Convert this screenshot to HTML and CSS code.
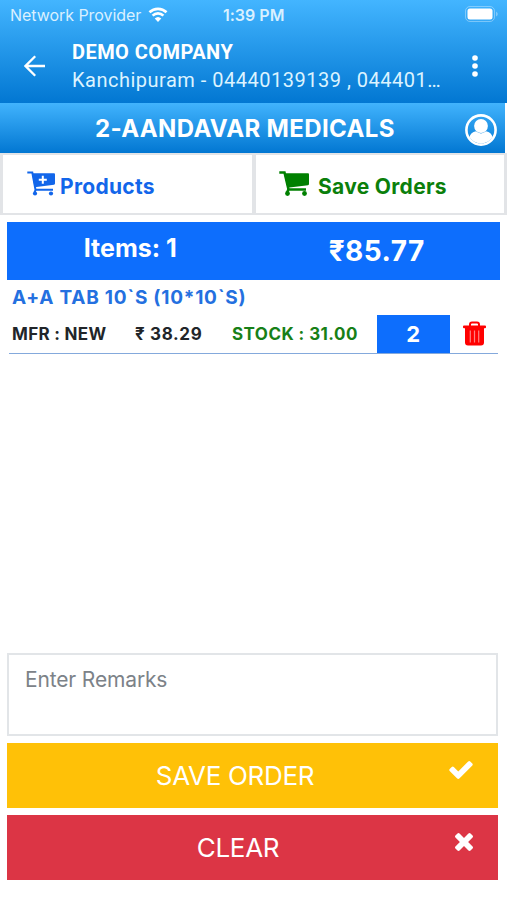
FILE: index.html
```html
<!DOCTYPE html>
<html lang="en">
<head>
  <meta charset="utf-8">
  <meta name="viewport" content="width=device-width, initial-scale=1">
  <title>Save Orders</title>
  <link rel="stylesheet" href="styles.css">
</head>
<body>
  <header class="app-header">
    <div class="status-bar">
      <span class="carrier">Network Provider</span>
      <svg class="wifi" viewBox="0 0 20 15">
        <path d="M1.500 5.300a12.300 12.300 0 0 1 17 0M4.600 8.600a7.800 7.800 0 0 1 10.800 0" fill="none" stroke="#fff" stroke-width="2.700"/>
        <path d="M10 15L6.700 11.600a4.800 4.800 0 0 1 6.600 0z" fill="#fff"/>
      </svg>
      <span class="clock">1:39 PM</span>
      <svg class="battery" viewBox="0 0 34 16">
        <rect x="0.500" y="0.500" width="29" height="15" rx="4.500" fill="none" stroke="#fff" stroke-opacity="0.350"/>
        <rect x="2.500" y="2.500" width="25" height="11" rx="2.500" fill="#fff"/>
        <path d="M31 5.500q1.800 1 1.800 2.500t-1.800 2.500z" fill="#fff" fill-opacity="0.350"/>
      </svg>
    </div>
    <div class="title-bar">
      <svg class="back" viewBox="0 0 22 22">
        <path d="M21 11H2M11.200 1.300L1.500 11l9.700 9.700" fill="none" stroke="#fff" stroke-width="2.300"/>
      </svg>
      <div class="company">
        <div class="company-name">DEMO COMPANY</div>
        <div class="company-info">Kanchipuram - 04440139139 , 044401…</div>
      </div>
      <svg class="more" viewBox="0 0 6 22">
        <circle cx="3" cy="3" r="2.800" fill="#fff"/>
        <circle cx="3" cy="11" r="2.800" fill="#fff"/>
        <circle cx="3" cy="19" r="2.800" fill="#fff"/>
      </svg>
    </div>
  </header>

  <div class="customer-bar">
    <span class="customer-name">2-AANDAVAR MEDICALS</span>
    <svg class="user" viewBox="0 0 32 32">
      <circle cx="16" cy="16" r="14.600" fill="none" stroke="#fff" stroke-width="2.600"/>
      <path d="M4.500 23q1-4.500 6.500-5.700 5 4.300 10 0 5.500 1.200 6.500 5.700a13.500 13.500 0 0 1-23 0z" fill="#fff"/>
      <circle cx="16" cy="12" r="6.900" fill="#fff"/>
    </svg>
  </div>

  <nav class="tabs">
    <a class="tab tab-products">
      <svg class="cart" viewBox="0 0 28 25">
        <path d="M.3 1.500h5l3.200 17.300H26M8.800 18.500l-1.300 3" fill="none" stroke="currentColor" stroke-width="2"/>
        <path d="M5 2.200H27q1 0 1 1V12.500q0 1-1 1.200L7.500 16.200z" fill="currentColor"/>
        <circle cx="8" cy="22.500" r="2.100" fill="currentColor"/>
        <circle cx="24" cy="22.500" r="2.100" fill="currentColor"/>
        <path d="M15.800 4.800v8M11.800 8.800h8" stroke="#fff" stroke-width="2"/>
      </svg>
      <span>Products</span>
    </a>
    <a class="tab tab-orders">
      <svg class="cart" viewBox="0 0 30 25">
        <path d="M.3 1.500h5.200l4 17H27M9.500 18l-1.300 3.500" fill="none" stroke="currentColor" stroke-width="2.500"/>
        <path d="M5 2.200H29q1 0 1 1V13q0 1-1 1.200L8.500 16.700z" fill="currentColor"/>
        <circle cx="8.500" cy="22.500" r="2.400" fill="currentColor"/>
        <circle cx="25.500" cy="22.500" r="2.400" fill="currentColor"/>
      </svg>
      <span>Save Orders</span>
    </a>
  </nav>

  <main class="content">
    <div class="totals">
      <span class="total-items">Items: 1</span>
      <span class="total-amount">₹85.77</span>
    </div>

    <div class="item">
      <div class="item-name">A+A TAB 10`S (10*10`S)</div>
      <div class="item-row">
        <span class="item-mfr">MFR : NEW</span>
        <span class="item-price">₹ 38.29</span>
        <span class="item-stock">STOCK : 31.00</span>
        <span class="item-qty">2</span>
        <svg class="trash" viewBox="0 0 23 26">
          <path d="M7 5V3.500q0-2 2-2h5q2 0 2 2V5" fill="none" stroke="#f00" stroke-width="2"/>
          <path d="M1 4.500h21q1 0 1 1v.8q0 1-1 1H1q-1 0-1-1v-.8q0-1 1-1zM2 7h19v14.500q0 3-3 3H5q-3 0-3-3z" fill="#f00"/>
          <path d="M7.300 9.500v12M11.500 9.500v12M15.700 9.500v12" stroke="#ff8080" stroke-width="1.200"/>
        </svg>
      </div>
    </div>

    <div class="actions">
      <textarea class="remarks" placeholder="Enter Remarks"></textarea>
      <button class="btn btn-save">
        <span>SAVE ORDER</span>
        <svg class="check" viewBox="121 334 1550 1188">
          <path fill="#fff" d="M1671 566q0 40-28 68l-724 724-136 136q-28 28-68 28t-68-28l-136-136-362-362q-28-28-28-68t28-68l136-136q28-28 68-28t68 28l294 295 656-657q28-28 68-28t68 28l136 136q28 28 28 68z"/>
        </svg>
      </button>
      <button class="btn btn-clear">
        <span>CLEAR</span>
        <svg class="times" viewBox="302 366 1188 1188">
          <path fill="#fff" d="M1490 1322q0 40-28 68l-136 136q-28 28-68 28t-68-28l-294-294-294 294q-28 28-68 28t-68-28l-136-136q-28-28-28-68t28-68l294-294-294-294q-28-28-28-68t28-68l136-136q28-28 68-28t68 28l294 294 294-294q28-28 68-28t68 28l136 136q28 28 28 68t-28 68l-294 294 294 294q28 28 28 68z"/>
        </svg>
      </button>
    </div>
  </main>
</body>
</html>
```
FILE: styles.css
```css
* {
  box-sizing: border-box;
}

body {
  display: flex;
  flex-direction: column;
  height: 900px;
  margin: 0;
  background-color: #fff;
  font-family: Inter, "Liberation Sans", sans-serif;
  font-feature-settings: "calt" 0;
  color: #212529;
  white-space: nowrap;
  overflow: hidden;
}

svg {
  display: block;
  flex: none;
}

.app-header {
  height: 103px;
  background: linear-gradient(to bottom, #43b5ff, #0277d2);
  color: #fff;
}

.status-bar {
  display: flex;
  align-items: center;
  height: 29px;
  padding: 0 8px 0 10px;
  color: #d9f0ff;
}

.carrier {
  width: 138px;
  font-size: 16px;
  letter-spacing: -0.05px;
}

.wifi {
  width: 20px;
  height: 15px;
}

.clock {
  margin-left: 55px;
  font-size: 16px;
  font-weight: 600;
}

.battery {
  width: 34px;
  height: 16px;
  margin-left: auto;
  margin-bottom: 1px;
}

.title-bar {
  display: flex;
  align-items: center;
  height: 74px;
  padding: 0 29px 0 24px;
}

.back {
  width: 22px;
  height: 22px;
}

.company {
  flex: 1;
  padding-left: 26px;
  font-family: Roboto, sans-serif;
}

.company-name {
  font-size: 20px;
  font-weight: 700;
  line-height: 28px;
  letter-spacing: 0.45px;
}

.company-info {
  font-size: 20px;
  line-height: 28px;
  letter-spacing: 0.5px;
  color: #dcf3ff;
}

.more {
  width: 6px;
  height: 22px;
}

.customer-bar {
  display: flex;
  align-items: center;
  width: 505px;
  height: 50px;
  padding: 0 8px 0 95px;
  background: linear-gradient(to bottom, #41b3fd, #0277d2);
  color: #fff;
}

.customer-name {
  flex: 1;
  font-size: 24px;
  font-weight: 650;
  letter-spacing: 0.35px;
}

.user {
  width: 32px;
  height: 32px;
  margin-top: 4px;
}

.tabs {
  display: grid;
  grid-template-columns: 249px 248px;
  gap: 4px;
  height: 62px;
  padding: 2px 3px 2px 3px;
  background-color: #e2e4e7;
}

.tab {
  display: flex;
  align-items: center;
  background-color: #fff;
  font-size: 21px;
  font-weight: 650;
  letter-spacing: 0.3px;
  padding-left: 24px;
  padding-top: 4px;
}

.tab-products {
  gap: 5px;
  color: #1266ea;
}

.tab-orders {
  gap: 9px;
  padding-left: 23px;
  color: #0b7f0b;
}

.cart {
  width: 28px;
  height: 25px;
  margin-bottom: 5px;
}

.tab-orders .cart {
  width: 30px;
  height: 25px;
  color: #008000;
}

.content {
  display: flex;
  flex: 1;
  flex-direction: column;
  padding: 7px 9px 20px 7px;
}

.totals {
  display: grid;
  grid-template-columns: 1fr 1fr;
  width: 493px;
  height: 58px;
  background-color: #0d6efd;
  color: #fff;
  font-size: 25px;
  font-weight: 650;
  line-height: 53px;
  text-align: center;
}

.total-amount {
  font-size: 28px;
  line-height: 59px;
  letter-spacing: 0.5px;
}

.item {
  height: 74px;
  margin-left: 2px;
  border-bottom: 1px solid #84a9dc;
}

.item-name {
  height: 35px;
  padding-left: 3px;
  font-size: 19px;
  font-weight: 650;
  line-height: 36px;
  letter-spacing: 0.75px;
  color: #2470e0;
}

.item-row {
  display: flex;
  align-items: center;
  height: 38px;
  padding-left: 3px;
  font-size: 17px;
  font-weight: 650;
  letter-spacing: 0.45px;
}

.item-mfr {
  width: 123px;
  letter-spacing: 0.3px;
}

.item-price {
  width: 97px;
  letter-spacing: 0.65px;
}

.item-stock {
  width: 145px;
  color: #178017;
}

.item-qty {
  width: 73px;
  height: 38px;
  background-color: #0d6efd;
  color: #fff;
  font-size: 22px;
  line-height: 38px;
  text-align: center;
}

.trash {
  width: 23px;
  height: 26px;
  margin-left: 13px;
}

.actions {
  display: flex;
  flex-direction: column;
  gap: 7px;
  margin-top: auto;
}

.remarks {
  height: 83px;
  padding: 12px 16px;
  border: 2px solid #e2e5e8;
  background-color: #fff;
  font-family: inherit;
  font-size: 21px;
  letter-spacing: -0.15px;
  resize: none;
}

.remarks::placeholder {
  color: #7c8288;
}

.btn {
  display: flex;
  height: 65px;
  padding: 0 25px 0 14px;
  border: 0;
  color: #fff;
  font-family: inherit;
  font-size: 26px;
  line-height: 66px;
  letter-spacing: -0.3px;
}

.btn span {
  flex: 1;
  text-align: center;
}

.btn svg {
  margin-top: 18px;
}

.btn-save {
  background-color: #ffc107;
}

.btn-clear {
  background-color: #dc3545;
}

.check {
  width: 24px;
  height: 18px;
}

.times {
  width: 18px;
  height: 18px;
}
```
